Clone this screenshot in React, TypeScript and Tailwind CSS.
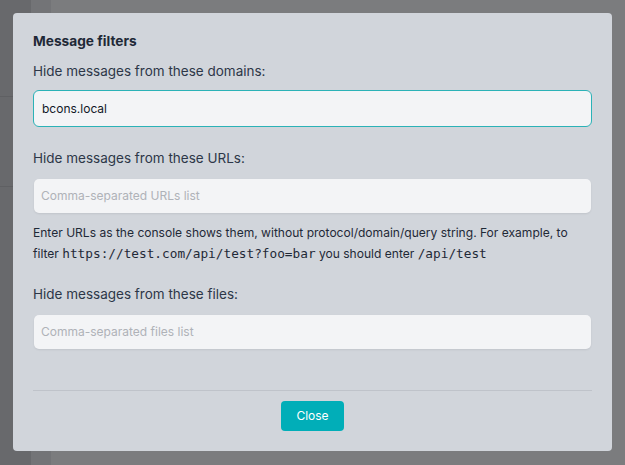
import React from "react";

export default function App() {
  const font = { fontFamily: "Inter, 'Noto Sans', sans-serif" };
  const mono = { fontFamily: "'DejaVu Sans Mono', 'Liberation Mono', monospace" };
  return (
    <div className="relative w-[625px] h-[465px] overflow-hidden bg-[#7b7c7e]" style={font}>
      {/* dimmed background app */}
      <div className="absolute inset-0 flex">
        <div className="w-[31px] h-full bg-[#68696c] flex flex-col">
          <div className="h-[97px] border-b border-[#5f6063]" />
          <div className="h-[90px] border-b border-[#5f6063]" />
        </div>
        <div className="w-[20px] h-full bg-[#737477]" />
        <div className="flex-1 h-full bg-[#7b7c7e]" />
      </div>

      {/* modal */}
      <div className="absolute left-[13px] top-[13px] w-[599px] h-[438px] rounded-[4px] bg-[#d1d5db] px-[20px] pt-[18px] text-[#1f2937]">
        <div className="text-[13.7px] font-bold leading-[20px] text-[#1f2937]">Message filters</div>

        <div className="mt-[10px] text-[13.5px] leading-[20px] text-[#2d3748]">Hide messages from these domains:</div>
        <div className="mt-[9px] h-[37px] rounded-[6px] border border-[#2bb2b7] bg-[#f3f4f6] flex items-center px-[8px] text-[12px] text-[#111827]">
          bcons.local
        </div>

        <div className="mt-[21px] text-[13.5px] leading-[20px] text-[#2d3748]">Hide messages from these URLs:</div>
        <div className="mt-[11px] mx-[1px] h-[34px] rounded-[5px] bg-[#f3f4f6] shadow-[0_1px_2px_rgba(0,0,0,0.08)] flex items-center px-[7px] text-[12px] text-[#afb2b8]">
          Comma-separated URLs list
        </div>

        <div className="mt-[9px] text-[12.05px] leading-[21px] text-[#1f2937]">
          Enter URLs as the console shows them, without protocol/domain/query string. For example, to filter{" "}
          <code className="text-[12.75px]" style={mono}>https://test.com/api/test?foo=bar</code>{" "}
          you should enter{" "}
          <code className="text-[12.75px]" style={mono}>/api/test</code>
        </div>

        <div className="mt-[20px] text-[13.5px] leading-[20px] text-[#2d3748]">Hide messages from these files:</div>
        <div className="mt-[11px] mx-[1px] h-[34px] rounded-[5px] bg-[#f3f4f6] shadow-[0_1px_2px_rgba(0,0,0,0.08)] flex items-center px-[7px] text-[12px] text-[#afb2b8]">
          Comma-separated files list
        </div>

        <div className="mt-[41px] border-t border-[#bfc3ca]" />
        <div className="mt-[10px] flex justify-center">
          <button className="h-[30px] w-[63px] rounded-[4px] bg-[#01aeb8] text-white text-[12px] leading-none">
            Close
          </button>
        </div>
      </div>
    </div>
  );
}
